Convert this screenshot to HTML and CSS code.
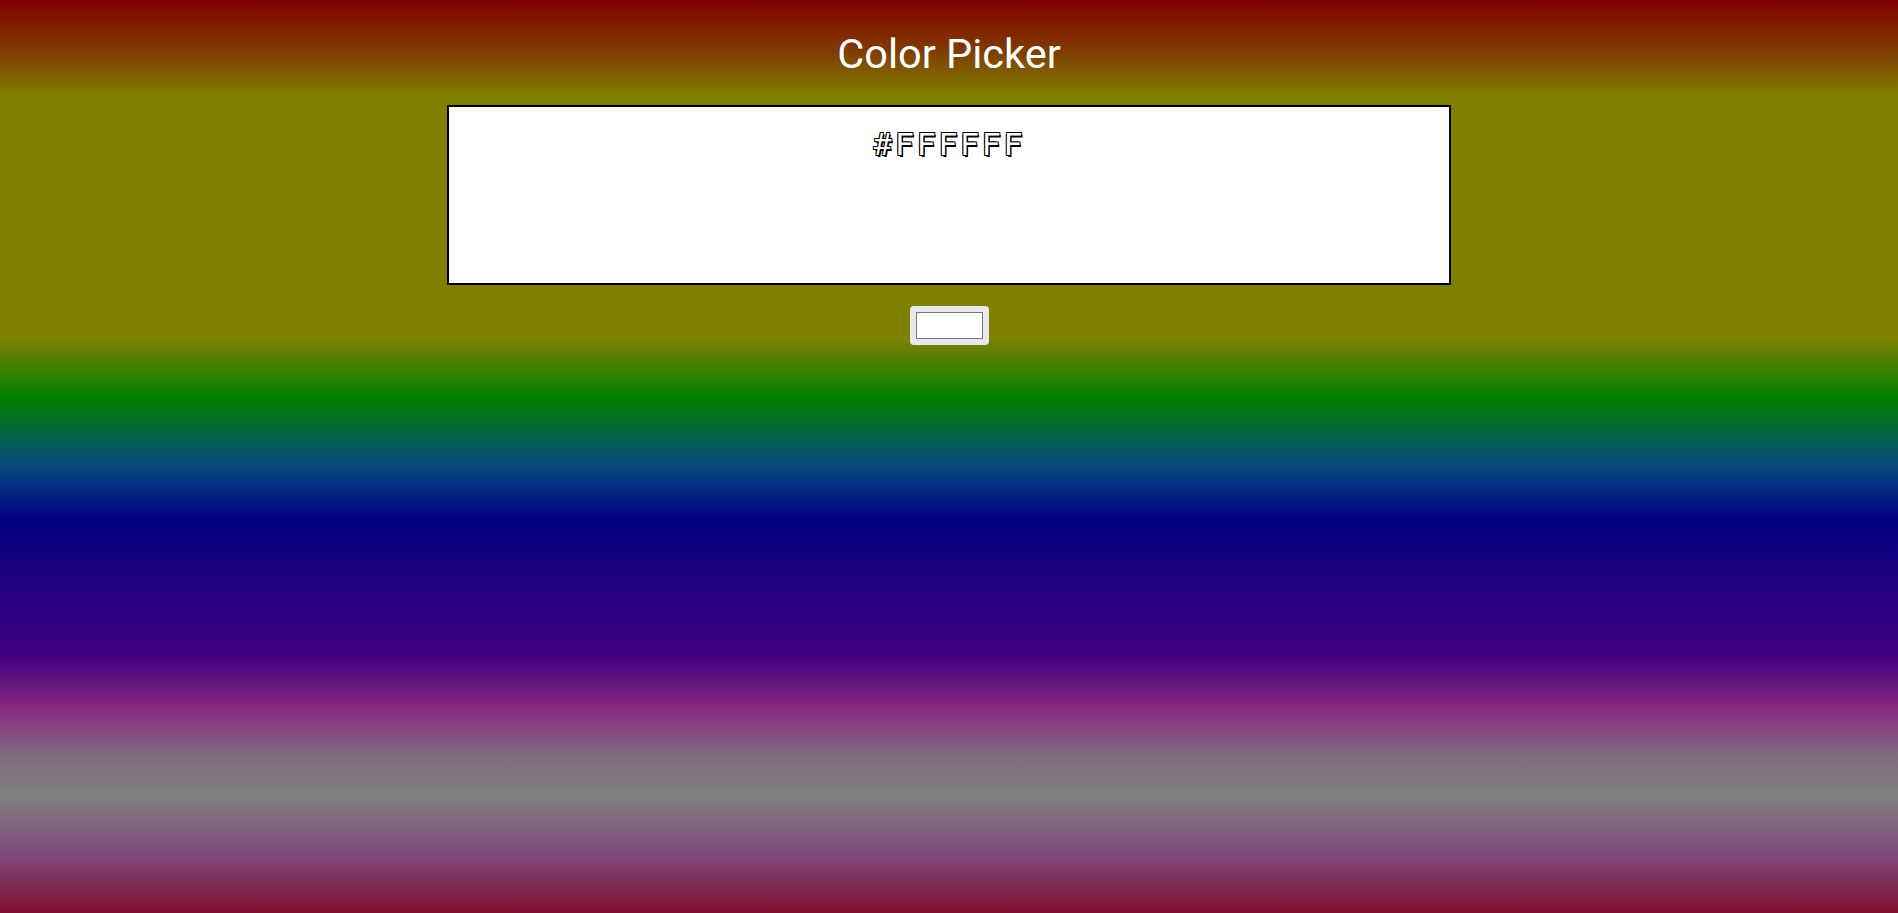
FILE: index.html
```html
<!DOCTYPE html>
<html lang="en">
<head>
<meta charset="utf-8">
<title>Color Picker</title>
<link rel="stylesheet" href="styles.css">
</head>
<body>
<main class="app">
  <h1 class="title">Color Picker</h1>
  <div class="display">
    <span class="hex">#FFFFFF</span>
  </div>
  <input class="picker" type="color" value="#ffffff">
</main>
</body>
</html>
```

FILE: styles.css
```css
html, body {
  margin: 0;
  padding: 0;
  height: 100%;
}

body {
  font-family: Roboto, "Liberation Sans", sans-serif;
  background: linear-gradient(to bottom,
    #800000 0px,
    #803800 48px,
    #808000 97px,
    #808000 338px,
    #008000 398px,
    #084880 467px,
    #000080 520px,
    #200080 580px,
    #400080 655px,
    #8a2c80 710px,
    #806a80 755px,
    #808080 796px,
    #804a80 853px,
    #801030 913px);
  background-repeat: no-repeat;
  min-height: 913px;
}

.app {
  display: flex;
  flex-direction: column;
  align-items: center;
  padding-top: 30px;
}

.title {
  margin: 0 0 28px;
  font-size: 41.5px;
  font-weight: 400;
  line-height: 47px;
  color: #ffffff;
}

.display {
  box-sizing: border-box;
  width: 1004px;
  height: 180px;
  border: 2px solid #000;
  background: #fff;
  display: flex;
  justify-content: center;
  align-items: flex-start;
  padding-top: 19px;
}

.hex {
  font-size: 32px;
  line-height: 37px;
  letter-spacing: 4px;
  color: #fff;
  text-shadow:
    -1px -1px 0 #000,
    1px -1px 0 #000,
    -1px 1px 0 #000,
    1px 1px 0 #000,
    1.5px 1.5px 0 #000;
}

.picker {
  margin-top: 21px;
  width: 79px;
  height: 39px;
  box-sizing: border-box;
  border: none;
  border-radius: 4px;
  background: #e9e9ed;
  padding: 2px 4px;
  cursor: pointer;
}
```
